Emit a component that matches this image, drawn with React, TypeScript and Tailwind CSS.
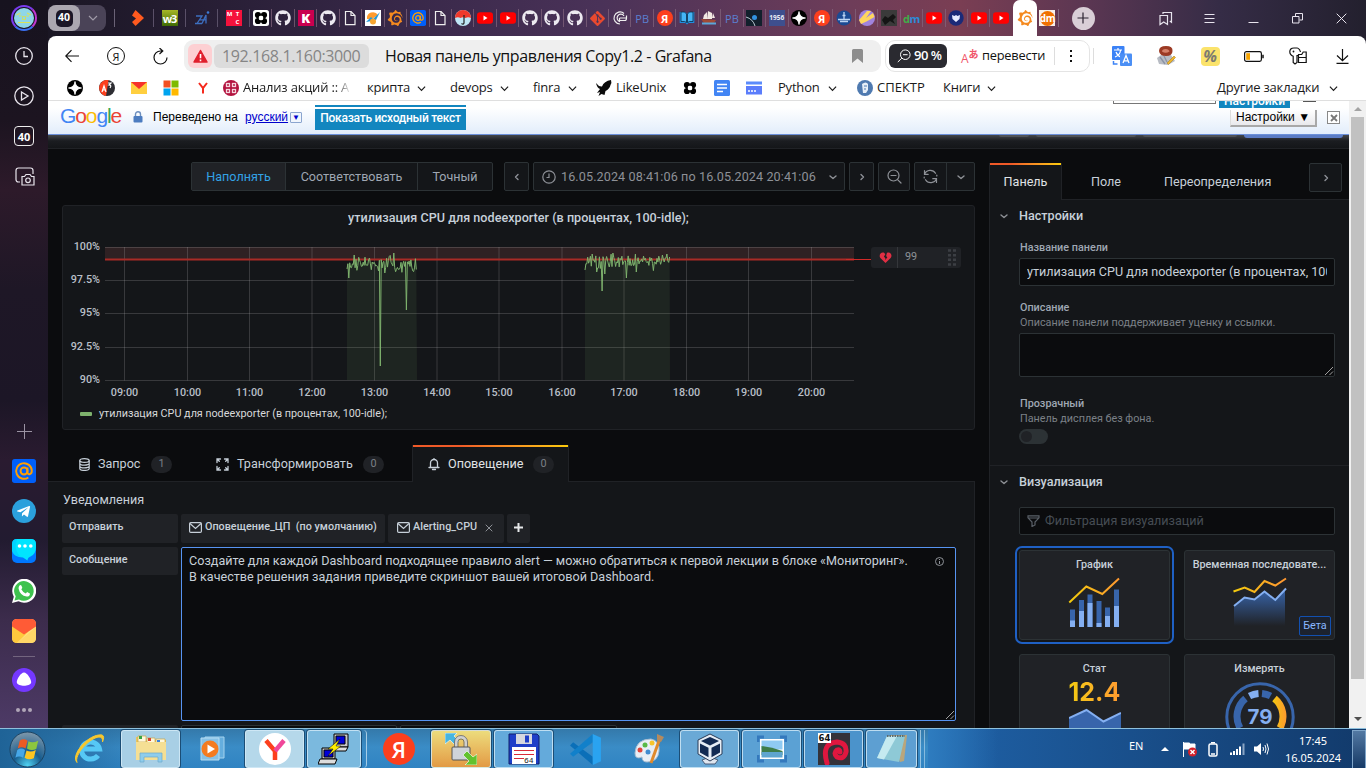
import React from "react";
import { FaGithub, FaTelegramPlane, FaGitAlt } from "react-icons/fa";
import { SiGrafana } from "react-icons/si";

type Kids = { children?: React.ReactNode };
type IconProps = Kids & { className?: string; box?: string };

const Svg = ({ children, className = "size-4", box = "0 0 16 16" }: IconProps) => (
  <svg viewBox={box} className={`shrink-0 ${className}`} fill="none">
    {children}
  </svg>
);

/* ---------- favicons ---------- */
const Github = () => <FaGithub className="size-4 text-[#ece9f0]" />;
const Youtube = () => (
  <Svg>
    <rect x="0" y="2.3" width="16" height="11.4" rx="3" fill="#f00" />
    <path d="M6.5 5.6v4.8l4-2.4z" fill="#fff" />
  </Svg>
);
const FileIcon = () => (
  <Svg>
    <path d="M3.5 1.500h5.500l4 4v9.200H3.500z" stroke="#eee" strokeWidth="1.200" />
    <path d="M9 1.500v4h4" stroke="#eee" strokeWidth="1.200" />
  </Svg>
);
const YaRed = () => (
  <div className="flex size-4 items-center justify-center rounded-full bg-[#fc3f1d] text-[11px] leading-none font-bold text-white">Я</div>
);
const PB = () => <span className="text-[11px] leading-none font-medium text-[#5b7fd0]">PB</span>;
const Star4 = () => (
  <Svg>
    <circle cx="8" cy="8" r="8" fill="#000" />
    <path d="M8 1.500Q8.600 7.400 14.500 8 8.600 8.600 8 14.500 7.400 8.600 1.500 8 7.400 7.400 8 1.500z" fill="#fff" stroke="#fff" strokeWidth=".8" />
  </Svg>
);
const FourDots = ({ white = false }: { white?: boolean }) => (
  <Svg>
    {white && <rect width="16" height="16" rx="2.500" fill="#fff" />}
    <g fill="#000">
      <circle cx="5" cy="5" r="3.100" />
      <circle cx="11" cy="5" r="3.100" />
      <circle cx="5" cy="11" r="3.100" />
      <circle cx="11" cy="11" r="3.100" />
    </g>
    <path d="M8 4.500L11.500 8 8 11.500 4.500 8z" fill="#fff" />
    <path d="M5 3v10M11 3v10M3 5h10M3 11h10" stroke="#000" strokeWidth="1.600" />
  </Svg>
);
const AtIcon = ({ className = "size-4" }: { className?: string }) => (
  <Svg className={className}>
    <rect width="16" height="16" rx="1.800" fill="#005ff9" />
    <circle cx="8" cy="8" r="2.300" stroke="#ff9e00" strokeWidth="1.300" />
    <path d="M10.300 5.700v3c0 2.300 2.900 1.900 2.900-.8A5.200 5.200 0 1 0 10.900 12.300" stroke="#ff9e00" strokeWidth="1.300" />
  </Svg>
);

const wideTabs: React.ReactNode[] = [
  <Svg key="a">
    <path d="M5.500 0L14 8l-8.500 8L2 12l4-3.500L2 5.500z" fill="#ff5a1f" />
  </Svg>,
  <div key="b" className="flex size-4 items-center justify-center bg-linear-to-b from-[#a6b727] to-[#3f6a05] text-[11px] leading-none font-bold tracking-[-1px] text-white">w3</div>,
  <Svg key="c">
    <path d="M2 6h6l-5 7.500h5M8 13.500L12 5v8.500M6 9.800h6.500M1 13.500h3" stroke="#3d6fc0" strokeWidth="1.300" />
    <circle cx="14" cy="2.500" r="1.300" fill="#3d7bd8" />
  </Svg>,
  <div key="d" className="grid size-4 grid-cols-2 bg-[#f5123c] text-center text-[6px] leading-[8px] font-bold text-white">
    <span>М</span>
    <span>Т</span>
    <span />
    <span>С</span>
  </div>,
];

const narrowTabs: React.ReactNode[] = [
  <FourDots white />,
  <Github />,
  <div className="flex size-4 items-center justify-center bg-[#c9004f] text-[13px] leading-none font-black text-white">K</div>,
  <Github />,
  <FileIcon />,
  <Svg>
    <rect width="16" height="16" fill="#fff" />
    <path d="M2 9a6 6 0 0 1 11-4L7 9z" fill="#ff9b2d" />
    <path d="M1 12l5-5 2 2 7-7-4 8-4 1z" fill="#2196d8" />
    <circle cx="8" cy="11.500" r="3" fill="#f7a531" />
  </Svg>,
  <SiGrafana className="size-4 text-[#f58a1f]" />,
  <AtIcon />,
  <FileIcon />,
  <Svg>
    <circle cx="8" cy="8" r="8" fill="#bfe6f5" />
    <path d="M0 8a8 8 0 0 1 16 0Q13 6.500 10.500 8 8 6.500 5.500 8 3 6.500 0 8z" fill="#f0392b" />
    <path d="M9 5v8q-.5 2-2.500.5" stroke="#222" strokeWidth="1.200" />
  </Svg>,
  <Youtube />,
  <Youtube />,
  <Github />,
  <Github />,
  <Github />,
  <FaGitAlt className="size-[17px] text-[#e8492f]" />,
  <Svg>
    <path d="M12 3.500A6 6 0 1 0 8 14M12 5.800A3.800 3.800 0 1 0 8 11.700M7.500 8h7v-2.500M7.500 8v2.500H13q1.500 0 1.500-2.500" stroke="#eee" strokeWidth="1.200" />
  </Svg>,
  <PB />,
  <YaRed />,
  <Svg>
    <path d="M.7 2v11h5.800L8 14.500 9.500 13h5.800V2H10L8 4 6 2z" fill="#1f8fe0" />
    <path d="M2 2h3.500L7.500 4v8.500L5.500 11.500H2zM14 2h-3.500L8.500 4v8.500l2-1H14z" fill="#44b4f5" stroke="#0c2b45" strokeWidth=".8" />
  </Svg>,
  <Svg>
    <path d="M3 5l3-3v7H2zM7 1l4 2v6H6zM12 3l2 5h-3z" fill="#f1e9e2" />
    <path d="M0 9l15 1-2 3H3z" fill="#a04a35" />
    <path d="M1 13.500h14" stroke="#5ba6d9" strokeWidth="2" />
  </Svg>,
  <PB />,
  <Svg>
    <rect width="16" height="16" fill="#12202c" />
    <circle cx="8.500" cy="7.500" r="2.500" fill="#3292e0" />
    <path d="M0 7q7 2 9 9" stroke="#b9c8d2" strokeWidth="1" />
  </Svg>,
  <div className="flex size-4 items-center justify-center bg-[#3e4f8e] text-[6.5px] leading-none font-bold text-[#e8eaf5]">1956</div>,
  <Star4 />,
  <YaRed />,
  <Svg>
    <circle cx="8" cy="8" r="7.500" fill="#1b4a93" />
    <path d="M8 2v8M6.500 5.500h3M2 9.500h12M4 11.500h8" stroke="#bcd4f2" strokeWidth="1.300" />
  </Svg>,
  <Svg>
    <circle cx="8" cy="8" r="8" fill="#a083dd" />
    <path d="M8 1l4 0-5 7L14 3l1.500 4-8 4.500L2 14 0 10z" fill="#ffd65c" />
  </Svg>,
  <Svg>
    <rect width="16" height="16" fill="#3a3a3a" />
    <path d="M1 10l3-4 3 2 5-4 3 3-3 3 2 4-5-3-5 4z" fill="#151515" />
  </Svg>,
  <span className="text-[11px] leading-none font-bold tracking-[-0.5px] text-[#2b8bd8]">
    <span className="text-[#3fae49]">d</span>m
  </span>,
  <Youtube />,
  <Svg>
    <circle cx="8" cy="8" r="7.700" fill="#1b2a78" />
    <path d="M4 5l2.500 1L8 5l1.500 1L12 5l-.5 4L8 12 4.500 9z" fill="#e8ecff" />
  </Svg>,
  <Youtube />,
  <Youtube />,
];

const TabStrip = () => (
  <div className="flex h-9 w-[1318px] items-center">
    <div className="flex h-[26px] w-[58px] items-center rounded-lg bg-[#4a4357]">
      <div className="flex h-[26px] w-8 items-center justify-center rounded-lg bg-[#aba7b0]">
        <div className="flex size-[17px] items-center justify-center rounded-[5px] bg-[#1b1626] text-[10.5px] font-bold text-white">40</div>
      </div>
      <Svg className="mx-auto size-[10px]" box="0 0 10 10">
        <path d="M1 3l4 4 4-4" stroke="#a09ba8" strokeWidth="1.200" />
      </Svg>
    </div>
    <div className="ml-2 h-[18px] w-px bg-[#6a6276]" />
    <div className="ml-[7px] flex">
      {wideTabs.map((t, i) => (
        <div key={i} className="flex h-[18px] w-8 items-center justify-center border-r border-[#5a5068]">{t}</div>
      ))}
    </div>
    <div className="flex">
      {narrowTabs.map((t, i) => (
        <div key={i} className="flex h-[18px] w-[22.45px] items-center justify-center border-r border-[#84677f]/70 last:border-transparent">{t}</div>
      ))}
    </div>
    <div className="flex h-9 w-[24px] items-center justify-center rounded-t-[7px] bg-white">
      <SiGrafana className="size-4 text-[#f58a1f]" />
    </div>
    <div className="flex h-[18px] w-[22px] items-center justify-center border-r border-[#84677f]">
      <div className="flex size-4 shrink-0 items-center justify-center bg-[#f7f0ea]">
        <div className="flex size-[15px] items-center justify-center rounded-full bg-[#f07000] text-[10px] leading-none font-bold tracking-[-0.5px] text-white">dm</div>
      </div>
    </div>
    <div className="ml-[13px] flex size-[23px] items-center justify-center rounded-full bg-[#d9ced6]">
      <Svg className="size-3" box="0 0 12 12">
        <path d="M6 .5v11M.5 6h11" stroke="#2b2230" strokeWidth="1.200" />
      </Svg>
    </div>
    <div className="ml-[49px] flex">
      <div className="flex w-11 items-center justify-center">
        <Svg className="size-[15px]" box="0 0 15 15">
          <path d="M5 3V1.500h8.500v9.800L11.800 10M2 4.500h7.500v9L5.700 11 2 13.500z" stroke="#e8e4ee" strokeWidth="1.200" />
        </Svg>
      </div>
      <div className="flex w-11 items-center justify-center">
        <Svg className="h-[11px] w-[11px]" box="0 0 11 11">
          <path d="M.5 1.500h10M.5 5.500h10M.5 9.500h10" stroke="#e8e4ee" />
        </Svg>
      </div>
      <div className="flex w-11 items-center justify-center">
        <Svg className="h-[11px] w-[11px]" box="0 0 11 11">
          <path d="M.5 9.500h10" stroke="#e8e4ee" />
        </Svg>
      </div>
      <div className="flex w-11 items-center justify-center">
        <Svg className="h-[11px] w-[11px]" box="0 0 11 11">
          <path d="M.5 3.500h6.500v6.500H.5zM3.500 3V.5h7V7H7.500" stroke="#e8e4ee" />
        </Svg>
      </div>
      <div className="flex w-11 items-center justify-center">
        <Svg className="h-[11px] w-[11px]" box="0 0 11 11">
          <path d="M.7.7l9.600 9.600M10.300.7L.7 10.300" stroke="#e8e4ee" />
        </Svg>
      </div>
    </div>
  </div>
);

const Chev = ({ className = "size-[9px]" }: { className?: string }) => (
  <Svg className={className} box="0 0 10 10">
    <path d="M1 3l4 4 4-4" stroke="currentColor" strokeWidth="1.300" />
  </Svg>
);

const AddressBar = () => (
  <div className="flex h-10 items-center pl-[17px] text-[#111]">
    <Svg className="size-[14px]" box="0 0 14 14">
      <path d="M14 7H.8M6.500 1.200L.8 7l5.700 5.800" stroke="#111" strokeWidth="1.200" />
    </Svg>
    <div className="ml-[28px] flex size-[18px] items-center justify-center rounded-full border border-[#111] text-[11px] leading-none">Я</div>
    <Svg className="ml-[27px] size-[17px]" box="0 0 17 17">
      <path d="M15 9.500a6.500 6.500 0 1 1-6.500-6.500h2.500M7.500 0l3.300 3-3.300 3" stroke="#111" strokeWidth="1.200" />
    </Svg>
    <div className="ml-[15px] flex h-8 w-[697px] items-center rounded-[9px] bg-[#efefef] pl-1">
      <div className="flex h-6 w-6 items-center justify-center rounded-md bg-[#fdd0d3]">
        <Svg className="size-[15px]" box="0 0 15 15">
          <path d="M7.500 1.500L14 13H1z" fill="#e01f2d" stroke="#e01f2d" strokeWidth="1.500" strokeLinejoin="round" />
          <path d="M7.500 5v4.200M7.500 10.500v1.700" stroke="#fff" strokeWidth="1.600" />
        </Svg>
      </div>
      <div className="ml-[2px] flex h-6 w-[155px] items-center rounded-md bg-[#dcdcdc] pl-2 text-[16px] tracking-[-0.36px] whitespace-nowrap text-[#858585]">192.168.1.160:3000</div>
      <div className="ml-4 w-[460px] text-[16px] tracking-[-0.42px] whitespace-nowrap">Новая панель управления Copy1.2 - Grafana</div>
      <Svg className="ml-[7px] h-[14px] w-[11px]" box="0 0 11 14">
        <path d="M0 1.500Q0 0 1.500 0h8Q11 0 11 1.500V14L5.500 9.500 0 14z" fill="#8d8d8d" />
      </Svg>
    </div>
    <div className="ml-[4px] flex h-8 w-[205px] items-center rounded-[10px] border border-[#e4e4e4] pl-[3px]">
      <div className="flex h-6 w-[58px] items-center rounded-md bg-[#2a2a30] pl-2 text-[13px] whitespace-nowrap text-white">
        <Svg className="mr-[3px] size-[14px]" box="0 0 14 14">
          <circle cx="8.300" cy="5.700" r="4.800" stroke="#fff" />
          <path d="M6 5.700h4.600M4.800 9.200L.8 13" stroke="#fff" />
        </Svg>
        <span className="font-semibold tracking-[-0.5px]">90 %</span>
      </div>
      <div className="ml-[14px] flex w-[21px] items-center leading-none text-[#f0566b]">
        <span className="pt-[6px] text-[12px]">A</span>
        <span className="pb-[5px] font-['Noto_Sans_CJK_JP',sans-serif] text-[10px] font-bold">あ</span>
      </div>
      <span className="w-[72px] text-[12.800px] tracking-[-0.2px] whitespace-nowrap">перевести</span>
      <div className="h-[18px] w-px bg-[#ddd]" />
      <Svg className="ml-[14px] h-[14px] w-1" box="0 0 4 14">
        <path d="M1 1h2v2H1zM1 6h2v2H1zM1 11h2v2H1z" fill="#111" />
      </Svg>
    </div>
    <div className="ml-[3px] h-4 w-px bg-[#ddd]" />
    <div className="ml-[6px] flex [&>div]:flex [&>div]:w-11 [&>div]:items-center [&>div]:justify-center">
      <div>
        <Svg className="size-5" box="0 0 20 20">
          <rect x="0" y="0" width="12.500" height="14" rx="1" fill="#3b82f6" />
          <path d="M2 4h8M6 2v2M3 11q5-2 5.500-6.500M4 6q1.500 4 5 5" stroke="#fff" strokeWidth="1.200" />
          <rect x="8" y="7.500" width="12" height="12.500" rx="1" fill="#4b8ff5" />
          <path d="M11 17l3-7.500 3 7.500M12 14.800h4" stroke="#fff" strokeWidth="1.300" />
          <path d="M1.500 15v3h4" stroke="#3b82f6" strokeWidth="1.500" />
        </Svg>
      </div>
      <div>
        <Svg className="size-5" box="0 0 20 20">
          <path d="M1 12l4-3h10l4 6-7 4-9-1z" fill="#b8bcc4" />
          <path d="M3 5q0-5 7-5t6.500 5q0 5-6.500 5T3 5z" fill="#9c3a24" />
          <path d="M6 5.500q0-2.500 3.500-2.500t4 2.500q-4 2.500-7.500 0z" fill="#d5816a" />
          <path d="M11 17l7-7 1.500 1.500-7 7z" fill="#eeb62c" stroke="#a8770f" strokeWidth=".5" />
          <path d="M4 11l5 7M8 10l3 6" stroke="#8b93a5" strokeWidth="1.300" />
        </Svg>
      </div>
      <div>
        <div className="flex size-[19px] items-center justify-center rounded bg-[#fbe36b] text-[16px] leading-none font-bold text-[#7d7b70] italic">%</div>
      </div>
      <div>
        <Svg className="h-[11px] w-5" box="0 0 20 11">
          <rect x=".6" y=".6" width="16.800" height="9.800" rx="1.800" stroke="#111" strokeWidth="1.200" />
          <rect x="2.200" y="2.200" width="3.800" height="6.600" fill="#f5a300" />
          <path d="M19 3.800v3.500" stroke="#111" strokeWidth="1.500" />
        </Svg>
      </div>
      <div>
        <Svg className="size-[18px]" box="0 0 18 18">
          <path d="M9 8.500H8v7L6 17l-1.800-1.500V9.200Q.8 8 .8 4.800.8 1 5 1h3.500" stroke="#111" strokeWidth="1.200" />
          <circle cx="4.500" cy="4.500" r=".9" fill="#111" />
          <path d="M8.500 1q2.500 1 3 4M9.500 15.500h7.700V5h-3l-1.500 2.500H9.500zM9.500 10.500h7.500" stroke="#111" strokeWidth="1.200" />
        </Svg>
      </div>
      <div>
        <Svg className="size-[15px]" box="0 0 15 15">
          <path d="M7.500 0v11.500M2 6.500l5.500 5.200L13 6.500M1.500 14.300h12" stroke="#111" strokeWidth="1.200" />
        </Svg>
      </div>
    </div>
  </div>
);

const BookmarksBar = () => (
  <div className="flex h-[25px] items-center border-b border-[#dfdfdf] pl-[19px] text-[13px] tracking-[-0.2px] whitespace-nowrap text-[#1a1a1a]">
    <div className="flex w-8"><Star4 /></div>
    <div className="flex w-8">
      <Svg>
        <circle cx="8" cy="8" r="8" fill="#2d2d33" />
        <path d="M9.500 0A8 8 0 1 0 7 16z" fill="#fc3f1d" />
        <path d="M3 12l2-6 2 6M3.500 10h3M9 3h3l-2 2q3 0 1 3" stroke="#fff" strokeWidth="1.200" />
      </Svg>
    </div>
    <div className="flex w-8">
      <Svg>
        <rect y="2" width="16" height="12" fill="#ffcf3f" />
        <path d="M0 2h16L8 9z" fill="#f6322b" />
      </Svg>
    </div>
    <div className="flex w-8">
      <Svg>
        <path d="M.5.500h7v7h-7z" fill="#f25022" />
        <path d="M8.500.500h7v7h-7z" fill="#7fba00" />
        <path d="M.5 8.500h7v7h-7z" fill="#00a4ef" />
        <path d="M8.500 8.500h7v7h-7z" fill="#ffb900" />
      </Svg>
    </div>
    <div className="flex w-7">
      <Svg>
        <path d="M4 3l4 5.200L12 3M8 8v5.500" stroke="#f52a1e" strokeWidth="2" />
      </Svg>
    </div>
    <div className="flex w-[144px] items-center">
      <Svg>
        <circle cx="8" cy="8" r="8" fill="#b3133f" />
        <g stroke="#f5d5de" strokeWidth="1.300">
          <rect x="3.500" y="3.500" width="3" height="3" />
          <rect x="9.500" y="3.500" width="3" height="3" />
          <rect x="3.500" y="9.500" width="3" height="3" />
          <rect x="9.500" y="9.500" width="3" height="3" />
        </g>
      </Svg>
      <span className="ml-1 w-[108px] overflow-hidden bg-linear-to-r from-[#1a1a1a] from-85% to-white bg-clip-text text-transparent">Анализ акций :: А</span>
    </div>
    <div className="flex w-[83px] items-center"><span className="w-[50px]">крипта</span><Chev /></div>
    <div className="flex w-[83px] items-center"><span className="w-[50px]">devops</span><Chev /></div>
    <div className="flex w-[63px] items-center"><span className="w-[35px]">finra</span><Chev /></div>
    <div className="flex w-[86px] items-center">
      <Svg>
        <path d="M0 3q3 4 6 3.500Q8 1 15 0q1 3-.5 5-1 4-5 6l-1 4-3-1-3 2 1.500-4L1 13l3-4Q1 8 0 3z" fill="#0b0b0b" />
      </Svg>
      <span className="ml-1">LikeUnix</span>
    </div>
    <div className="flex w-8"><FourDots /></div>
    <div className="flex w-8">
      <Svg>
        <rect width="16" height="16" rx="1.500" fill="#4285f4" />
        <path d="M3 4.500h10M3 8h10M3 11.500h6" stroke="#fff" strokeWidth="1.500" />
      </Svg>
    </div>
    <div className="flex w-8">
      <Svg>
        <path d="M0 1.500h16v3H0z" fill="#5b8bfb" />
        <path d="M0 6h16v8.500H0z" fill="#5b7dfb" />
        <path d="M2 11h2M5 11h2M8 11h2" stroke="#fff" strokeWidth="1.500" />
      </Svg>
    </div>
    <div className="flex w-[79px] items-center"><span className="w-[50px]">Python</span><Chev /></div>
    <div className="flex w-[86px] items-center">
      <Svg>
        <circle cx="8" cy="8" r="8" fill="#4f7ab0" />
        <path d="M5 4q4-3 6 0v6l-2 3H6z" fill="#e6eef7" />
        <path d="M7 6h3M8 8v2" stroke="#4f7ab0" />
      </Svg>
      <span className="ml-1 tracking-normal">СПЕКТР</span>
    </div>
    <div className="flex w-[274px] items-center"><span className="w-[44px]">Книги</span><Chev /></div>
    <div className="flex items-center"><span className="w-[112px]">Другие закладки</span><Chev /></div>
  </div>
);

/* ---------- sidebar ---------- */
const Sidebar = () => (
  <div className="flex h-[728px] w-12 flex-col items-center">
    <div className="mt-[5px] flex size-[26px] shrink-0 items-center justify-center rounded-full border-2 border-[#7a3cf0] border-r-[#c03ad0] border-b-[#3a6ff0]">
      <Svg className="size-[20px]" box="0 0 20 20">
        <circle cx="10" cy="10" r="10" fill="#8fd6e8" />
        <path d="M2.500 7l4-2M13 5l4 2M5 8h2.500M12.500 8H15M4 14.500h12" stroke="#dbe35a" strokeWidth="1.200" />
        <rect x="8.500" y="8.500" width="3" height="3" stroke="#c8dd70" />
      </Svg>
    </div>
    <Svg className="mt-[16px] size-[18px]" box="0 0 18 18">
      <circle cx="9" cy="9" r="8.300" stroke="#e8e4ec" strokeWidth="1.300" />
      <path d="M9 4v5.500h4" stroke="#e8e4ec" strokeWidth="1.300" />
    </Svg>
    <Svg className="mt-[21px] size-[20px]" box="0 0 20 20">
      <circle cx="10" cy="10" r="9.200" stroke="#e8e4ec" strokeWidth="1.300" />
      <path d="M7.500 6l6.500 4-6.500 4z" stroke="#e8e4ec" strokeWidth="1.300" />
    </Svg>
    <div className="mt-[20px] flex size-[20px] items-center justify-center rounded-[4px] border border-[#eee] text-[11px] leading-none font-bold text-white">40</div>
    <Svg className="mt-[20px] size-[21px]" box="0 0 21 21">
      <path d="M19 8V4.500Q19 2 16.500 2h-12Q2 2 2 4.500v9Q2 16 4.500 16H6" stroke="#e8e4ec" strokeWidth="1.200" />
      <path d="M8 10.500h2.500L12 8.500h4l1.500 2H20V19H8z" stroke="#e8e4ec" strokeWidth="1.200" />
      <circle cx="14" cy="14.300" r="2.300" stroke="#e8e4ec" strokeWidth="1.200" />
    </Svg>
    <Svg className="mt-[237px] size-[15px]" box="0 0 15 15">
      <path d="M7.500 0v15M0 7.500h15" stroke="#9b93a3" />
    </Svg>
    <div className="mt-[20px] flex flex-col gap-4">
      <AtIcon className="size-6" />
      <div className="flex size-6 items-center justify-center rounded-full bg-[#2ba0dc]"><FaTelegramPlane className="mr-[2px] size-[15px] text-white" /></div>
      <Svg className="size-6" box="0 0 24 24">
        <rect width="24" height="24" rx="5" fill="#0077ff" />
        <path d="M0 12q2 6 11 6.500l4.500 3q0-3 3-4Q24 15 24 8V5q0-5-5-5H5Q0 0 0 5z" fill="#00e5ff" />
        <path d="M0 5q0-5 5-5l-1.500 8Q5 15 9 18 2 17 0 13z" fill="#0af" fillOpacity=".3" />
        <circle cx="7.500" cy="7" r="1.800" fill="#fff" />
        <circle cx="13" cy="7" r="1.800" fill="#fff" />
        <circle cx="18.800" cy="7" r="1.800" fill="#fff" />
      </Svg>
      <Svg className="size-6" box="0 0 24 24">
        <path d="M0 24l1.800-6.300A12 12 0 1 1 6.500 22.300z" fill="#fff" />
        <path d="M2.500 21.500l1.200-4.200A9.800 9.800 0 1 1 7 20.400z" fill="#3ec24e" />
        <path d="M7.500 6.500q1.300-1.300 2 .2l.8 2q-.2.800-1 1.600 1.500 3 4.500 4.300l1.300-1.500 2.800 1.300q.3 3-3.300 3.200Q8 16.500 6.600 9.800q-.2-2 .9-3.300z" fill="#fff" />
      </Svg>
      <Svg className="size-6" box="0 0 24 24">
        <rect width="24" height="24" rx="5" fill="#ffdf80" />
        <path d="M0 6v13q0 5 5 5L16 13z" fill="#ffc93d" />
        <path d="M24 8v11q0 5-5 5h-14L24 8z" fill="#ffd667" />
        <path d="M0 7.500V5q0-5 5-5h14q5 0 5 5v2.500L12 15.500z" fill="#ff5b36" />
      </Svg>
    </div>
    <div className="mt-[13px] h-px w-[22px] bg-[#73657f]" />
    <Svg className="mt-[11px] size-6" box="0 0 24 24">
      <circle cx="12" cy="12" r="12" fill="#7438ff" />
      <path d="M12 4.500c3.200 0 7.500 7 7.200 10C18.800 17 15 17.700 12 17.700s-6.800-.7-7.200-3.200c-.3-3 4-10 7.200-10z" fill="#fff" />
    </Svg>
    <div className="mt-4 flex gap-[2px]">
      <div className="size-1 rounded-full bg-[#b0a6b8]" />
      <div className="size-1 rounded-full bg-[#b0a6b8]" />
      <div className="size-1 rounded-full bg-[#b0a6b8]" />
    </div>
  </div>
);

/* ---------- translate bar ---------- */
const TranslateBar = () => (
  <div className="h-[34px] border-b border-[#6b90da] bg-linear-to-b from-white from-20% to-[#e2edfb] font-['Liberation_Sans',sans-serif] text-[12px] text-black">
    <div className="flex h-[33px] whitespace-nowrap">
      <div className="mt-[1px] ml-3 w-[73px] text-[21px] leading-[27px] tracking-[-1.100px]">
        <span className="text-[#4285f4]">G</span>
        <span className="text-[#ea4335]">o</span>
        <span className="text-[#fbbc05]">o</span>
        <span className="text-[#4285f4]">g</span>
        <span className="text-[#34a853]">l</span>
        <span className="text-[#ea4335]">e</span>
      </div>
      <Svg className="mt-[10px] h-[12px] w-[10px]" box="0 0 10 12">
        <rect x=".5" y="5" width="9" height="6.500" rx="1" fill="#4c7cc0" />
        <path d="M2.500 5V3.300a2.500 2.500 0 0 1 5 0V5" stroke="#6d8fbf" strokeWidth="1.400" />
      </Svg>
      <span className="mt-[9px] ml-[10px] w-[92px] leading-[14px]">Переведено на</span>
      <span className="mt-[9px] w-[43px] leading-[14px] text-[#0000cc] underline">русский</span>
      <div className="mt-[11px] ml-[2px] flex h-[11px] w-[12px] items-center justify-center rounded-[1px] border border-[#8ba5cf] bg-[#f1f6fd] text-[8px] text-[#0000cc]">▼</div>
      <div className="ml-[13px] w-[151px] pt-[4px]">
        <div className="h-[2px] bg-[#1286bf]" />
        <div className="mt-[2px] flex h-[21px] items-center justify-center bg-[#1286bf] pb-[3px] font-[Roboto,sans-serif] text-[12px] font-medium tracking-[-0.26px] text-white">Показать исходный текст</div>
      </div>
      <div className="ml-[647px] h-[3px] w-[103px] border-x border-b border-[#777]" />
      <div className="ml-[3px] h-[7px] w-[71px] overflow-hidden bg-[#1286bf] text-center font-[Roboto,sans-serif] text-[12px] leading-[1px] font-medium text-white">Настройки</div>
      <div className="ml-[13px] h-px w-[13px] bg-[#555]" />
    </div>
  </div>
);

const TranslateOptions = () => (
  <div className="absolute top-[9px] right-[9px] flex gap-[10px] font-['Liberation_Sans',sans-serif] text-[12px] text-black">
    <div className="flex h-[17px] w-[87px] items-center justify-center border-r-2 border-b-2 border-l border-[#a8a8a8] border-l-[#ddd] bg-linear-to-b from-white to-[#e9e9ec] pb-[2px] whitespace-nowrap">Настройки ▼</div>
    <div className="mt-[1px] flex size-[13px] items-center justify-center border border-[#888] bg-white">
      <Svg className="size-2" box="0 0 8 8">
        <path d="M1 1l6 6M7 1L1 7" stroke="#777" strokeWidth="1.800" />
      </Svg>
    </div>
  </div>
);

/* ---------- grafana ---------- */
const GChev = ({ d, className = "size-[10px]" }: { d: string; className?: string }) => (
  <Svg className={className} box="0 0 10 10">
    <path d={d} stroke="#8e9197" strokeWidth="1.400" strokeLinecap="round" strokeLinejoin="round" />
  </Svg>
);
const LEFT = "M6 2.500L3.500 5l2.500 2.500";
const RIGHT = "M4 2.500l2.500 2.500-2.500 2.500";
const DOWN = "M2 4l3 2.500 3-2.500";

const Toolbar = () => (
  <div className="mt-[13px] ml-[129px] flex h-[29px] text-[12.6px] whitespace-nowrap text-[#9fa7b3]">
    <div className="flex h-[29px] w-[302px] divide-x divide-[#2c3235] rounded-[2px] border border-[#2c3235] bg-[#141619]">
      <div className="flex w-[94px] items-center justify-center bg-[#202226] pt-px text-[#33a2e5]">Наполнять</div>
      <div className="flex w-[132px] items-center justify-center pt-px">Соответствовать</div>
      <div className="flex w-[74px] items-center justify-center pt-px">Точный</div>
    </div>
    <div className="ml-[11px] flex w-[25px] items-center justify-center rounded-[2px] border border-[#2c3235] bg-[#141619]"><GChev d={LEFT} /></div>
    <div className="ml-1 flex w-[312px] items-center rounded-[2px] border border-[#2c3235] bg-[#141619] pl-2 text-[#8e9197]">
      <Svg className="size-[14px]" box="0 0 14 14">
        <circle cx="7" cy="7" r="6.200" stroke="#8e9197" strokeWidth="1.200" />
        <path d="M7 3.500V7.500H4.500" stroke="#8e9197" strokeWidth="1.200" />
      </Svg>
      <span className="ml-[5px] w-[267px] pt-px tracking-[0.1px]">16.05.2024 08:41:06 по 16.05.2024 20:41:06</span>
      <GChev d={DOWN} />
    </div>
    <div className="ml-1 flex w-[25px] items-center justify-center rounded-[2px] border border-[#2c3235] bg-[#141619]"><GChev d={RIGHT} /></div>
    <div className="ml-1 flex w-[32px] items-center justify-center rounded-[2px] border border-[#2c3235] bg-[#141619]">
      <Svg className="size-[15px]" box="0 0 15 15">
        <circle cx="6.500" cy="6.500" r="5.500" stroke="#8e9197" strokeWidth="1.200" />
        <path d="M4 6.500h5M10.800 10.800l3.200 3.200" stroke="#8e9197" strokeWidth="1.200" strokeLinecap="round" />
      </Svg>
    </div>
    <div className="ml-1 flex w-[61px] divide-x divide-[#2c3235] rounded-[2px] border border-[#2c3235] bg-[#141619]">
      <div className="flex w-[32px] items-center justify-center">
        <Svg className="size-[15px]" box="0 0 15 15">
          <path d="M1.500 5.200A6.200 6.200 0 0 1 12.500 4.300M1.500 1.500v3.800h3.700M13.500 9.800A6.200 6.200 0 0 1 2.500 10.700M13.500 13.500V9.700H9.800M1.200 8v1M13.800 7V6" stroke="#8e9197" strokeWidth="1.200" strokeLinecap="round" />
        </Svg>
      </div>
      <div className="flex w-[27px] items-center justify-center"><GChev d={DOWN} /></div>
    </div>
  </div>
);

const noise = (n: number) => {
  const v = Math.sin(n * 12.9898 + 4.1) * 43758.5453;
  return v - Math.floor(v);
};

const buildSeries = (from: number, to: number, base: number, amp: number, spikes: Record<number, number>) => {
  const pts: [number, number][] = [];
  for (let i = 0; from + i * 0.9 <= to; i++) {
    const x = from + i * 0.9;
    const key = Object.keys(spikes).find((k) => Math.abs(Number(k) - x) < 0.46);
    const y = key ? spikes[Number(key)] : base + (noise(i + from) + noise(i * 2 + from) - 1) * amp;
    pts.push([x, y]);
  }
  return pts;
};

const seriesA = buildSeries(285, 355, 59, 10, { 285: 64, 287: 73, 292: 50, 318.400: 161, 323: 68, 332: 48, 344: 105, 355: 51 });
const seriesB = buildSeries(523, 608, 57, 9, { 523: 65, 530: 49, 534.500: 67, 540: 86, 543: 69, 551: 48, 564: 73, 574: 67, 608: 52 });
const line = (p: [number, number][]) => p.map(([x, y]) => `${x.toFixed(1)},${y.toFixed(1)}`).join(" ");

const hours = ["09:00", "10:00", "11:00", "12:00", "13:00", "14:00", "15:00", "16:00", "17:00", "18:00", "19:00", "20:00"];
const ticks = [62.500, 125.500, 187.500, 250, 312.500, 375, 437, 500, 562, 624.500, 686.500, 749.500];
const levels: [string, number][] = [["100%", 42.500], ["97.5%", 75.500], ["95%", 108.500], ["92.5%", 142.500], ["90%", 175.500]];

const Chart = () => (
  <svg width="911" height="223" className="absolute -top-px -left-px" fontFamily="Roboto, sans-serif" fontSize="10.8" fill="#c7d0d9">
    <rect x="43" y="42" width="749" height="12.500" fill="#ea7070" fillOpacity=".13" />
    {levels.map(([l, y]) => (
      <g key={l}>
        <line x1="43" x2="792" y1={y} y2={y} stroke="#c8c8c8" strokeOpacity=".2" />
        <text x="38" y={y + 2.500} textAnchor="end" fontWeight="500" fill="#b9bfc7">{l}</text>
      </g>
    ))}
    {hours.map((h, i) => (
      <g key={h}>
        <line x1={ticks[i]} x2={ticks[i]} y1="42" y2="175.500" stroke="#c8c8c8" strokeOpacity=".2" />
        <text x={ticks[i]} y="191" textAnchor="middle" fontWeight="500" fill="#b9bfc7">{h}</text>
      </g>
    ))}
    <polygon points={`285,175 ${line(seriesA)} 355,175`} fill="#7eb26d" fillOpacity=".1" />
    <polygon points={`523,175 ${line(seriesB)} 608,175`} fill="#7eb26d" fillOpacity=".1" />
    <line x1="43" x2="792" y1="54.500" y2="54.500" stroke="#a92b26" strokeWidth="1.800" />
    <line x1="784" x2="809" y1="54.500" y2="54.500" stroke="#d02a28" strokeWidth="1" />
    <polyline points={line(seriesA)} fill="none" stroke="#7eb26d" strokeWidth="1" />
    <polyline points={line(seriesB)} fill="none" stroke="#7eb26d" strokeWidth="1" />
  </svg>
);

const GraphPanel = () => (
  <div className="relative mt-[14px] flex h-[225px] w-[913px] flex-col rounded-[3px] border border-[#202226] bg-[#141619]">
    <div className="mt-[4px] text-center text-[12.6px] leading-4 font-medium tracking-[0.02px] text-[#c7d0d9]">утилизация CPU для nodeexporter (в процентах, 100-idle);</div>
    <Chart />
    <div className="mt-[21px] ml-[808px] flex h-[21px] w-[90px] items-center rounded-[3px] bg-[#202226] text-[10.8px] text-[#8e9197]">
      <Svg className="ml-[8px] size-[13px]" box="0 0 14 14">
        <path d="M7 13L1.500 7.500C-.8 4.500 2.500.3 5.800 2.200L6.800 3.800 5.300 6 7 8 6.300 10 9 7 7.700 5.500 8.500 2.200C12 .3 15 4.500 12.500 7.500z" fill="#e02f44" />
      </Svg>
      <div className="ml-[5px] h-[21px] w-px bg-[#35373b]" />
      <span className="ml-[7px] w-[43px]">99</span>
      <Svg className="h-[17px] w-[8px]" box="0 0 8 17">
        <path d="M0 1.500h3M5 1.500h3M0 6.200h3M5 6.200h3M0 10.800h3M5 10.800h3M0 15.500h3M5 15.500h3" stroke="#3c3f44" strokeWidth="2.500" />
      </Svg>
    </div>
    <div className="mt-auto mb-[9px] ml-[17px] flex items-center text-[10.8px] leading-[13px] text-[#d8d9da]">
      <div className="mr-[7px] h-1 w-3 rounded-[1px] bg-[#7eb26d]" />
      утилизация CPU для nodeexporter (в процентах, 100-idle);
    </div>
  </div>
);

const Badge = ({ n }: { n: string }) => (
  <div className="flex h-[17px] w-[21px] shrink-0 items-center justify-center rounded-full bg-[#202226] text-[10.8px] text-[#7b8087]">{n}</div>
);

const EditorTabs = () => (
  <div className="mt-[15px] -ml-[14px] flex h-[37px] text-[12.6px] whitespace-nowrap text-[#c7d0d9]">
    <div className="flex w-[364px] items-center border-b border-[#202226] pt-[2px] pl-[31px]">
      <Svg className="h-[13px] w-[11px]" box="0 0 11 13">
        <ellipse cx="5.500" cy="2.500" rx="4.700" ry="1.900" stroke="#c7d0d9" strokeWidth="1.200" />
        <path d="M.8 2.500v8c0 2.600 9.400 2.600 9.400 0v-8M.8 5.200c0 2.600 9.400 2.600 9.400 0M.8 7.900c0 2.600 9.400 2.600 9.400 0" stroke="#c7d0d9" strokeWidth="1.200" />
      </Svg>
      <span className="ml-[8px] w-[53px]">Запрос</span>
      <Badge n="1" />
      <Svg className="ml-[44px] size-[13px]" box="0 0 13 13">
        <path d="M1 4.500V1h3.500M1.300 1.300l2 2M12 4.500V1H8.500M11.700 1.300l-2 2M12 8.500V12H8.500M11.700 11.700l-2-2M1 8.500V12h3.500M1.300 11.700l2-2" stroke="#c7d0d9" strokeWidth="1.300" strokeLinecap="round" />
      </Svg>
      <span className="ml-2 w-[126px]">Трансформировать</span>
      <Badge n="0" />
    </div>
    <div className="w-[157px] border-x border-[#202226] bg-[#141619]">
      <div className="h-[2px] bg-linear-to-r from-[#f05a28] from-30% to-[#fbca0a]" />
      <div className="flex h-[35px] items-center pl-[15px]">
        <Svg className="h-[13px] w-[12px]" box="0 0 12 13">
          <path d="M2.500 9V5a3.500 3.500 0 0 1 7 0v4M1 9.500h10M6 1.500V.5M4.500 11.500h3" stroke="#c7d0d9" strokeWidth="1.300" strokeLinecap="round" />
        </Svg>
        <span className="ml-[8px] w-[85px] text-[#e0e3e6]">Оповещение</span>
        <Badge n="0" />
      </div>
    </div>
    <div className="w-[406px] border-b border-[#202226]" />
  </div>
);

const Mail = () => (
  <Svg className="h-[11px] w-[13px]" box="0 0 13 11">
    <rect x=".6" y=".6" width="11.800" height="9.800" rx="1.200" stroke="#c7d0d9" strokeWidth="1.200" />
    <path d="M1 1.500l5.500 5 5.500-5" stroke="#c7d0d9" strokeWidth="1.200" />
  </Svg>
);
const Grip = () => (
  <Svg className="size-[9px]" box="0 0 9 9">
    <path d="M0 8L8 0M4.500 8L8 4.500" stroke="#a0a0a0" strokeWidth="1" />
  </Svg>
);

const AlertForm = () => (
  <div className="-ml-[14px] flex h-[246px] w-[927px] flex-col overflow-hidden border-r border-[#202226] bg-[#141619] pl-[14px] text-[10.8px] font-medium whitespace-nowrap text-[#c7d0d9]">
    <div className="mt-[10px] ml-px shrink-0 text-[12.6px] leading-[16px] font-normal">Уведомления</div>
    <div className="mt-[6px] flex h-[29px] shrink-0 items-stretch gap-[3px]">
      <div className="flex w-[116px] items-center rounded-[2px] bg-[#202226] pb-[2px] pl-[7px]">Отправить</div>
      <div className="flex w-[204px] items-center rounded-[2px] bg-[#202226] pb-[2px] pl-2"><Mail /><span className="ml-[3px] whitespace-pre">Оповещение_ЦП  (по умолчанию)</span></div>
      <div className="flex w-[116px] items-center rounded-[2px] bg-[#202226] pb-[2px] pl-[9px]">
        <Mail />
        <span className="ml-[3px] w-[72px]">Alerting_CPU</span>
        <Svg className="size-[8px]" box="0 0 8 8"><path d="M.7.7l6.600 6.600M7.300.7L.7 7.300" stroke="#8e9197" /></Svg>
      </div>
      <div className="flex w-[23px] items-center justify-center rounded-[2px] bg-[#202226] pb-[2px]">
        <Svg className="size-[9px]" box="0 0 9 9"><path d="M4.500 0v9M0 4.500h9" stroke="#e6e8ea" strokeWidth="2" /></Svg>
      </div>
    </div>
    <div className="mt-1 flex shrink-0 gap-[3px]">
      <div className="flex h-[28px] w-[116px] items-center rounded-[2px] bg-[#202226] pb-[2px] pl-[7px]">Сообщение</div>
      <div className="flex h-[174px] w-[775px] flex-col rounded-[2px] border border-[#5794f2] bg-[#0b0c0e] pt-[5px] pl-[7px] text-[12.6px] leading-[16px] font-normal">
        <div className="flex items-center">
          <span className="w-[746px]">Создайте для каждой Dashboard подходящее правило alert — можно обратиться к первой лекции в блоке «Мониторинг».</span>
          <Svg className="size-[9px]" box="0 0 9 9">
            <circle cx="4.500" cy="4.500" r="4" stroke="#8e9197" />
            <path d="M4.500 4v3M4.500 2v1" stroke="#8e9197" />
          </Svg>
        </div>
        <span>В качестве решения задания приведите скриншот вашей итоговой Dashboard.</span>
        <div className="mt-auto ml-auto"><Grip /></div>
      </div>
    </div>
    <div className="mt-1 flex h-4 shrink-0 gap-[3px]">
      <div className="w-[116px] rounded-[2px] bg-[#202226]" />
      <div className="w-[216px] rounded-[2px] border border-[#2c3235] bg-[#0b0c0e]" />
      <div className="w-[217px] rounded-[2px] border border-[#2c3235] bg-[#0b0c0e]" />
    </div>
  </div>
);

const SectionHead = ({ children }: Kids) => (
  <div className="flex h-4 items-center text-[12.6px] font-medium text-[#c7d0d9]">
    <GChev d={DOWN} className="mr-[10px] ml-[9px] size-[10px]" />
    {children}
  </div>
);

const Card = ({ title, children, active }: Kids & { title: string; active?: boolean }) => (
  <div className={`flex h-[90px] w-[151px] shrink-0 flex-col items-center rounded-[3px] border border-[#2c3235] bg-[#202226] pt-[6px] ${active ? "outline-2 outline-offset-[2px] outline-[#1f60c4]" : ""}`}>
    <div className="h-[16px] text-[10.8px] leading-4 font-medium whitespace-nowrap text-[#c7d0d9]">{title}</div>
    {children}
  </div>
);

const bars: [number, number, number][] = [[2, 32.500, 43.500], [11, 23, 34], [19.500, 17.500, 26], [28.500, 24, 46], [37, 30.500, 39], [46, 12.500, 29]];

const OptionsPane = () => (
  <div className="flex h-[579px] w-[360px] flex-col overflow-hidden whitespace-nowrap">
    <div className="mt-[14px] flex h-[37px] shrink-0 text-[12.6px] text-[#c7d0d9]">
      <div className="w-[73px] border-x border-[#202226] bg-[#141619]">
        <div className="h-[2px] bg-linear-to-r from-[#f05a28] from-30% to-[#fbca0a]" />
        <div className="flex h-[34px] items-center justify-center text-[#e0e3e6]">Панель</div>
      </div>
      <div className="flex w-[287px] border-b border-[#202226] pl-[29px]">
        <span className="mt-[11px] w-[73px] leading-4">Поле</span>
        <span className="mt-[11px] w-[145px] leading-4">Переопределения</span>
        <div className="flex h-[29px] w-[33px] items-center justify-center rounded-[2px] border border-[#2c3235] bg-[#141619]"><GChev d={RIGHT} /></div>
      </div>
    </div>
    <div className="flex h-[528px] shrink-0 flex-col border-l border-[#202226] bg-[#141619]">
      <div className="mt-[8px] shrink-0"><SectionHead>Настройки</SectionHead></div>
      <div className="ml-[29px] w-[316px] shrink-0 text-[10.8px] text-[#9fa7b3]">
        <div className="mt-[17px] ml-px leading-[14px] font-medium">Название панели</div>
        <div className="mt-[3px] h-[28px] overflow-hidden rounded-[2px] border border-[#2c3235] bg-[#0b0c0e] px-[7px] text-[12.6px] leading-[26px] text-[#c7d0d9]">
          <div className="overflow-hidden">утилизация CPU для nodeexporter (в процентах, 100-idle);</div>
        </div>
        <div className="mt-[15px] ml-px leading-[14px] font-medium">Описание</div>
        <div className="mt-px ml-px leading-[14px] text-[#7b8087]">Описание панели поддерживает уценку и ссылки.</div>
        <div className="mt-[3px] flex h-[44px] items-end justify-end rounded-[2px] border border-[#2c3235] bg-[#0b0c0e]"><Grip /></div>
        <div className="mt-[20px] ml-px leading-[14px] font-medium">Прозрачный</div>
        <div className="mt-px ml-px leading-[14px] text-[#7b8087]">Панель дисплея без фона.</div>
        <div className="mt-[3px] flex h-[15px] w-[29px] items-center rounded-full bg-[#2c3235] pl-[2px]"><div className="size-[11px] rounded-full bg-[#202226]" /></div>
      </div>
      <div className="mt-[21px] h-px shrink-0 bg-[#202226]" />
      <div className="mt-[8px] shrink-0"><SectionHead>Визуализация</SectionHead></div>
      <div className="mt-[17px] ml-[29px] flex h-[28px] w-[316px] shrink-0 items-center rounded-[2px] border border-[#2c3235] bg-[#0b0c0e] pl-[7px] text-[12.6px] text-[#464c54]">
        <Svg className="mr-[5px] h-[12px] w-[13px]" box="0 0 13 12">
          <path d="M1 .8h11v2L8 7v3l-3 1.500V7L1 2.800zM1 3h11" stroke="#5a6068" strokeWidth="1.200" />
        </Svg>
        Фильтрация визуализаций
      </div>
      <div className="mt-[15px] ml-[29px] grid w-[316px] shrink-0 grid-cols-[151px_151px] gap-[14px]">
        <Card title="График" active>
          <Svg className="mt-[4px] mr-px h-[51px] w-[52px]" box="0 0 52 51">
            <defs>
              <linearGradient id="warm" gradientUnits="userSpaceOnUse" x1="0" x2="52"><stop stopColor="#f2cc0c" /><stop offset="1" stopColor="#ff9830" /></linearGradient>
            </defs>
            {bars.map(([x, a, b]) => (
              <g key={x}>
                <rect x={x} y={a} width="5" height={50 - a} fill="#3865ab" />
                <rect x={x} y={b} width="5" height={50 - b} fill="#84aff1" />
              </g>
            ))}
            <polyline points="1.300,25.500 18.300,9.500 34.300,17 51,1.500" stroke="url(#warm)" strokeWidth="2" />
          </Svg>
        </Card>
        <div className="relative">
          <Card title="Временная последовате...">
            <Svg className="mt-[4px] h-[50px] w-[55px]" box="0 0 55 50">
              <defs>
                <linearGradient id="cool" x2="0" y2="1"><stop stopColor="#3865ab" /><stop offset="1" stopColor="#3865ab" stopOpacity="0" /></linearGradient>
              </defs>
              <polygon points="2,29 12.500,20.500 22.500,22.500 32.500,14.500 43.300,23 53,12 53,49 2,49" fill="url(#cool)" />
              <polyline points="1.500,14.500 12.700,10.500 22.500,15 32.500,4 43.300,8.500 54,1.500" stroke="url(#warm)" strokeWidth="2" />
              <polyline points="2,29 12.500,20.500 22.500,22.500 32.500,14.500 43.300,23 54,11.500" stroke="#84aff1" strokeWidth="2" />
            </Svg>
          </Card>
          <div className="absolute right-[4px] bottom-[4px] flex h-[20px] w-[32px] items-center justify-center rounded-[2px] border border-[#1250b0] bg-[#1c222e] text-[10.8px] text-[#8ab8ff]">Бета</div>
        </div>
        <Card title="Стат">
          <div className="h-[28px] w-[56px] bg-linear-to-r from-[#f2cc0c] to-[#ff9830] bg-clip-text text-center font-[Inter,sans-serif] text-[25px] leading-[30px] font-bold text-transparent">12.4</div>
          <Svg className="mt-px h-[25px] w-[52px]" box="0 0 52 25">
            <polygon points="0,12 17.500,4.500 34.500,15.500 52,7 52,25 0,25" fill="#3865ab" />
            <polyline points="0,12 17.500,4 34.500,15.500 52,7" stroke="#84aff1" strokeWidth="2" />
          </Svg>
        </Card>
        <Card title="Измерять">
          <Svg className="mt-[5px] h-[70px] w-[70px]" box="0 0 70 70">
            <circle cx="35" cy="35" r="33.200" stroke="#3865ab" strokeWidth="3" />
            <g strokeWidth="7" fill="none">
              <path d="M15 46A23.500 23.500 0 0 1 20.500 16.500" stroke="#3865ab" />
              <path d="M24.500 14A23.500 23.500 0 0 1 33.500 11.500" stroke="#84aff1" />
              <path d="M37 11.500A23.500 23.500 0 0 1 45.500 14" stroke="#3865ab" />
              <path d="M49.500 16.500A23.500 23.500 0 0 1 55 46" stroke="url(#warmGauge)" />
            </g>
            <defs>
              <linearGradient id="warmGauge" gradientUnits="userSpaceOnUse" x1="46" x2="62"><stop stopColor="#f2cc0c" /><stop offset="1" stopColor="#ff9830" /></linearGradient>
            </defs>
            <text x="35" y="42" textAnchor="middle" fontFamily="Inter, sans-serif" fontWeight="700" fontSize="20.500" fill="#84aff1">79</text>
          </Svg>
        </Card>
      </div>
    </div>
  </div>
);

const Grafana = () => (
  <div className="flex h-[593px] flex-col bg-[#0b0c0e] font-[Roboto,sans-serif]">
    <div className="flex h-[14px] gap-[7px] border-b border-[#202226] bg-linear-to-b from-[#45484c] via-[#1b1d21] via-45% to-[#141619] pl-[951px]">
      <div className="h-[2px] w-[30px] rounded-b bg-[#505357]" />
      <div className="h-[2px] w-[100px] rounded-b bg-[#505357]" />
      <div className="h-[2px] w-[94px] rounded-b bg-[#505357]" />
      <div className="h-[3px] w-[99px] rounded-b bg-[#5b7cc4]" />
    </div>
    <div className="flex">
      <div className="w-[941px] pl-[14px]">
        <Toolbar />
        <GraphPanel />
        <EditorTabs />
        <AlertForm />
      </div>
      <OptionsPane />
    </div>
  </div>
);

const ScrollBar = () => (
  <div className="flex h-[627px] w-[17px] flex-col items-center bg-[#f1f1f1]">
    <div className="mt-[6px] border-x-[4px] border-b-[4px] border-x-transparent border-b-[#a3a3a3]" />
    <div className="mt-[6px] h-[562px] w-[13px] bg-[#c1c1c1]" />
    <div className="mt-auto mb-[7px] border-x-[4px] border-t-[4px] border-x-transparent border-t-[#505050]" />
  </div>
);

/* ---------- taskbar ---------- */
const Btn = ({ children, className }: IconProps) => (
  <div className={`flex h-[38px] items-center justify-center rounded-[3px] border border-[#d5ebf7]/80 shadow-[0_0_0_1px_#1b4d75] ${className}`}>{children}</div>
);

const Taskbar = () => (
  <div className="relative flex h-10 items-center overflow-hidden border-t border-[#8ec0dc] bg-linear-to-r from-[#2a6f9e] via-[#1f62a8] via-68% to-[#123a6b] pt-px">
    <div className="flex h-10 w-[928px] items-center bg-[linear-gradient(90deg,#1f6397_0px,#1f639799_70px,transparent_140px),linear-gradient(180deg,#3479aa,#3a8cc6_45%,#2f83c2)]">
      <div className="flex w-[57px] justify-center">
        <Svg className="ml-[-3px] size-[37px]" box="0 0 38 38">
          <defs>
            <radialGradient id="orb" cx=".5" cy=".95" r=".9"><stop stopColor="#4fd2f2" /><stop offset=".45" stopColor="#175c8e" /><stop offset="1" stopColor="#7793a8" /></radialGradient>
          </defs>
          <circle cx="19" cy="19" r="18" fill="url(#orb)" stroke="#1b4160" />
          <path d="M11 10q4-3 8 0l-2 8q-4-2.500-8 0z" fill="#ec5b24" />
          <path d="M20 10.500q4 2.500 10-.5l-2 8.500q-5 2.500-9.500-.5z" fill="#8cc63f" />
          <path d="M8.500 19.500q4-3 8 0l-2 8q-4-2.500-8 0z" fill="#46a7e8" />
          <path d="M18 20q4.500 2.500 9.500-.5l-2 8.500q-5 2.500-9.500-.5z" fill="#fcc522" />
        </Svg>
      </div>
      <div className="flex w-[64px] justify-center">
        <Svg className="size-8" box="0 0 32 32">
          <path d="M25 22.500a9 8.500 0 1 1 1.500-6.500H10.500" stroke="#56c8f5" strokeWidth="5" />
          <path d="M4 29.500C-3 22 16 0 29 2q3 1 .5 7 .5-5-3.500-5C16 5 1 22 4 29.500z" fill="#f7c72e" stroke="#f7c72e" />
        </Svg>
      </div>
      <Btn className="w-[59px] bg-[#a8cfe5]">
        <Svg className="size-8" box="0 0 32 32">
          <path d="M1 4h8l2 3h20v20H1z" fill="#e8c660" />
          <path d="M3 3h8v6H3zM12 5h8v5h-8zM21 6h9v6h-9z" fill="#fff8dc" stroke="#c9a544" strokeWidth=".7" />
          <path d="M4 3h3v3H4z" fill="#36a545" /><path d="M13 5h3v3h-3z" fill="#d8422f" /><path d="M22 7h3v3h-3z" fill="#3b82d8" />
          <path d="M1 9h30v18H1z" fill="#f5df94" />
          <path d="M5 29V20h22v9h-4v-5H9v5z" fill="#8fcdec" stroke="#6aa9cf" strokeWidth=".7" />
        </Svg>
      </Btn>
      <div className="flex w-[65px] justify-center">
        <Svg className="size-[28px]" box="0 0 28 28">
          <path d="M6 2h19v21H6z" fill="#65aede" stroke="#a5d3ee" />
          <path d="M2 3h18v22H2z" fill="#86c1e6" stroke="#b6dcf2" />
          <circle cx="11" cy="14" r="8.500" fill="#f47b20" />
          <path d="M8.500 9.500v9L16 14z" fill="#fff" />
        </Svg>
      </div>
      <Btn className="w-[59px] bg-[#b5d8ea]">
        <Svg className="size-8" box="0 0 32 32">
          <circle cx="16" cy="16" r="16" fill="#fff" />
          <path d="M7 7.500l9 10.500v9" stroke="#fc3f1d" strokeWidth="4.500" />
          <path d="M16 18l9-10.500" stroke="#f0479a" strokeWidth="4.500" />
        </Svg>
      </Btn>
      <Btn className="ml-[3px] w-[54px] bg-[#7bb9de]">
        <Svg className="size-8" box="0 0 32 32">
          <g stroke="#000">
            <path d="M16 1h14v13H16z" fill="#c8c8c8" /><path d="M18 3h9v8h-9z" fill="#0000d8" />
            <path d="M14 14h16l-2 4H12z" fill="#ddd" />
            <path d="M4 15h13v11H4z" fill="#c8c8c8" /><path d="M6 17h9v7H6z" fill="#0000d8" />
            <path d="M2 26h17l-2 5H0z" fill="#ddd" />
            <path d="M22 6l-12 10h5l-5 7 13-10h-5z" fill="#ffee00" strokeWidth=".5" />
          </g>
        </Svg>
      </Btn>
      <div className="h-[38px] w-[6px] rounded-r border-r border-[#d5ebf7]/70" />
      <div className="flex w-[64px] justify-center">
        <div className="flex size-8 items-center justify-center rounded-full bg-[#fc3f1d] text-[22px] leading-none font-semibold text-white">Я</div>
      </div>
      <Btn className="w-[60px] bg-linear-to-b from-[#ecdc7c] to-[#e29a44]">
        <Svg className="size-8" box="0 0 32 32">
          <path d="M0 0h12L9 3l5 5-4 4-5-5-5 4z" fill="#46b5e0" stroke="#fff" strokeWidth=".6" />
          <path d="M11 15V9a5 5 0 0 1 10 0v6" stroke="#d0d0d0" strokeWidth="3.500" />
          <path d="M13 15V9a3 3 0 0 1 6 0v6M9.500 14V9a6.500 6.500 0 0 1 13 0v5" stroke="#555" strokeWidth=".7" />
          <rect x="7" y="14" width="18" height="13" rx="1" fill="#cfd3d8" stroke="#555" />
          <path d="M32 32H20l4-4-6-6 4-4 6 6 4-3z" fill="#62c22e" stroke="#fff" strokeWidth=".6" />
        </Svg>
      </Btn>
      <Btn className="ml-[3px] w-[59px] bg-[#64aadb]">
        <Svg className="size-8" box="0 0 32 32">
          <path d="M1 1h28l2 2v28H1z" fill="#1e3fc8" stroke="#10206a" />
          <path d="M8 1h16v10H8z" fill="#d5d8df" /><path d="M17 2.500h4v7h-4z" fill="#1e3fc8" />
          <path d="M4 14h24v17H4z" fill="#fff" />
          <path d="M6 17.500h20M6 21.500h20M6 25.500h10" stroke="#d82a3a" strokeWidth="1.200" />
          <text x="16" y="30" fontSize="8" fill="#222" fontFamily="Liberation Mono, monospace">64</text>
        </Svg>
      </Btn>
      <div className="flex w-[64px] justify-center">
        <Svg className="size-[33px]" box="0 0 32 32">
          <path d="M1 12l3-3 19 14v8z" fill="#0b6fb8" />
          <path d="M23 1L1 20l3 3 19-14z" fill="#1180ca" />
          <path d="M23 1l8 3.500v23L23 31z" fill="#2aa3f0" />
        </Svg>
      </div>
      <div className="flex w-[63px] justify-center">
        <Svg className="size-8" box="0 0 32 32">
          <path d="M2 20Q3 6 18 6q9 2 8 12-1 11-12 11-5 0-5-5-7 3-7-4z" fill="#e8eef5" stroke="#a9bdd0" />
          <circle cx="7" cy="17" r="2.500" fill="#e2443a" /><circle cx="12" cy="12" r="2.500" fill="#58b947" /><circle cx="19" cy="10" r="2.500" fill="#f7c52c" /><circle cx="15" cy="19" r="2.500" fill="#3f8bd0" />
          <path d="M26 8l-8 22" stroke="#e08a2c" strokeWidth="3" />
          <path d="M24 1l7 3-3 5-4-1z" fill="#b48a5e" />
        </Svg>
      </div>
      <Btn className="w-[59px] bg-[#6aa9d6]">
        <Svg className="size-8" box="0 0 32 32">
          <path d="M8 27q8-4 16 0l-3 4H11z" fill="#dfe6ef" stroke="#4a5d78" />
          <path d="M16 1l12 6v14l-12 7L4 21V7z" fill="#e6edf5" stroke="#2a3c58" />
          <path d="M16 4l9 4-9 4.500L7 8zM6 10.500l8.500 4.200v9.500L6 19.500zM26 10.500l-8.500 4.200v9.500l8.500-4.700z" fill="#122a52" />
        </Svg>
      </Btn>
      <Btn className="ml-[3px] w-[59px] bg-[#5ba1d4]">
        <Svg className="size-[30px]" box="0 0 30 30">
          <path d="M1 8V3h6M23 3h6v5M29 21v6h-6M7 27H1v-6" stroke="#3479bd" strokeWidth="3" />
          <path d="M3 5h24v20H3z" fill="#fff" /><path d="M4.500 6.500h21v9h-21z" fill="#8fcaf2" /><path d="M4.500 12q10 1 21 5v4h-21z" fill="#3e7d4a" /><path d="M4.500 18h21v5.500h-21z" fill="#5fa5cf" />
        </Svg>
      </Btn>
      <Btn className="ml-[3px] w-[59px] bg-[#4b93cb]">
        <Svg className="size-8" box="0 0 32 32">
          <rect width="32" height="32" fill="#343239" />
          <path d="M9 30Q3 10 19 9q10 1 9 10-2 8-9 5-4-4 0-7 3-1 3 2" stroke="#e0173f" strokeWidth="5" strokeLinecap="round" />
          <path d="M0 0h13v10H0z" fill="#fff" />
          <text x=".5" y="8.300" fontSize="8.500" fontWeight="700" fill="#111" fontFamily="DejaVu Sans, sans-serif">64</text>
        </Svg>
      </Btn>
      <Btn className="ml-[3px] w-[51px] bg-[#5d9fd2]">
        <Svg className="size-8" box="0 0 32 32">
          <path d="M14 2h17l-3 26-4 1z" fill="#b9a67c" />
          <path d="M11 3h18l-6 26L1 25z" fill="#8ec9d6" />
          <path d="M11 3h10L8 26.500 1 25z" fill="#c5eaf0" />
          <path d="M11 3h18" stroke="#5b6b70" strokeWidth="2" strokeDasharray="1.500 1" />
        </Svg>
      </Btn>
      <div className="h-[38px] w-1 border-r border-[#d5ebf7]/60" />
      <div className="h-[38px] w-1 border-r border-[#d5ebf7]/50" />
    </div>
    <div className="h-10 w-[70px] bg-linear-to-r from-[#2e7cbf] to-transparent" />
    <div className="ml-auto flex h-10 items-center font-['Noto_Sans',sans-serif] text-white">
      <span className="w-[32px] pb-[6px] text-[11px]">EN</span>
      <div className="border-x-[4px] border-b-[4px] border-x-transparent border-b-white" />
      <Svg className="ml-[13px] size-[16px]">
        <path d="M1.500 1v15M1.500 2h6v6h-6M7 3h6v5H7z" fill="#fff" stroke="#fff" />
        <circle cx="10.500" cy="11" r="4.500" fill="#d3202a" />
        <path d="M8.500 9l4 4M12.500 9l-4 4" stroke="#fff" strokeWidth="1.400" />
      </Svg>
      <Svg className="ml-[10px] h-[15px] w-[10px]" box="0 0 10 15">
        <rect x="1" y="2" width="8" height="12" rx="1.500" stroke="#fff" strokeWidth="1.500" />
        <path d="M3 .8h4M3 12h4" stroke="#fff" strokeWidth="1.500" />
      </Svg>
      <Svg className="ml-[12px] h-[12px] w-[15px]" box="0 0 15 12">
        <path d="M1 12V9.500M4 12V8M7 12V6M10 12V3.500" stroke="#fff" strokeWidth="2" />
        <path d="M13.500 12V.5" stroke="#8aa5c4" strokeWidth="2" />
      </Svg>
      <Svg className="ml-[9px] h-[14px] w-[15px]" box="0 0 15 14">
        <path d="M0 4.500h3L7 1v12L3 9.500H0z" fill="#fff" />
        <path d="M9 5q1 2 0 4M11 3q2 4 0 8M13 1.500q3 5.500 0 11" stroke="#fff" />
      </Svg>
      <div className="ml-[13px] w-[62px] text-center text-[11px] leading-[17px] whitespace-nowrap">
        <div>17:45</div>
        <div>16.05.2024</div>
      </div>
      <div className="ml-[8px] h-[39px] w-[14px] border border-[#7fa5c9] bg-linear-to-b from-[#5379a3] to-[#163a66]" />
    </div>
  </div>
);

export default function App() {
  return (
    <div className="flex h-[768px] w-[1366px] flex-col overflow-hidden bg-[#1b1524] font-['Open_Sans','Noto_Sans',sans-serif]">
      <div className="flex h-[728px] bg-[linear-gradient(90deg,#17141f_0px,#221b2e_150px,#382849_400px,#4a3258_600px,#6e3d59_850px,#7a3e53_960px,#5a3652_1090px,#352c46_1220px,#23202e_1366px)]">
        <div className="bg-[linear-gradient(180deg,#17131f_0px,#1c1420_120px,#2d1a2a_190px,#1e1726_290px,#1c1626_400px,#2a1b30_460px,#221b30_540px,#3c2c4c_620px,#4d3a66_728px)]">
          <Sidebar />
        </div>
        <div className="w-[1318px]">
          <TabStrip />
          <div className="overflow-hidden rounded-t-[8px] bg-white">
            <AddressBar />
            <BookmarksBar />
          </div>
          <div className="flex">
            <div className="relative w-[1301px]">
              <TranslateBar />
              <TranslateOptions />
              <Grafana />
            </div>
            <ScrollBar />
          </div>
        </div>
      </div>
      <Taskbar />
    </div>
  );
}
